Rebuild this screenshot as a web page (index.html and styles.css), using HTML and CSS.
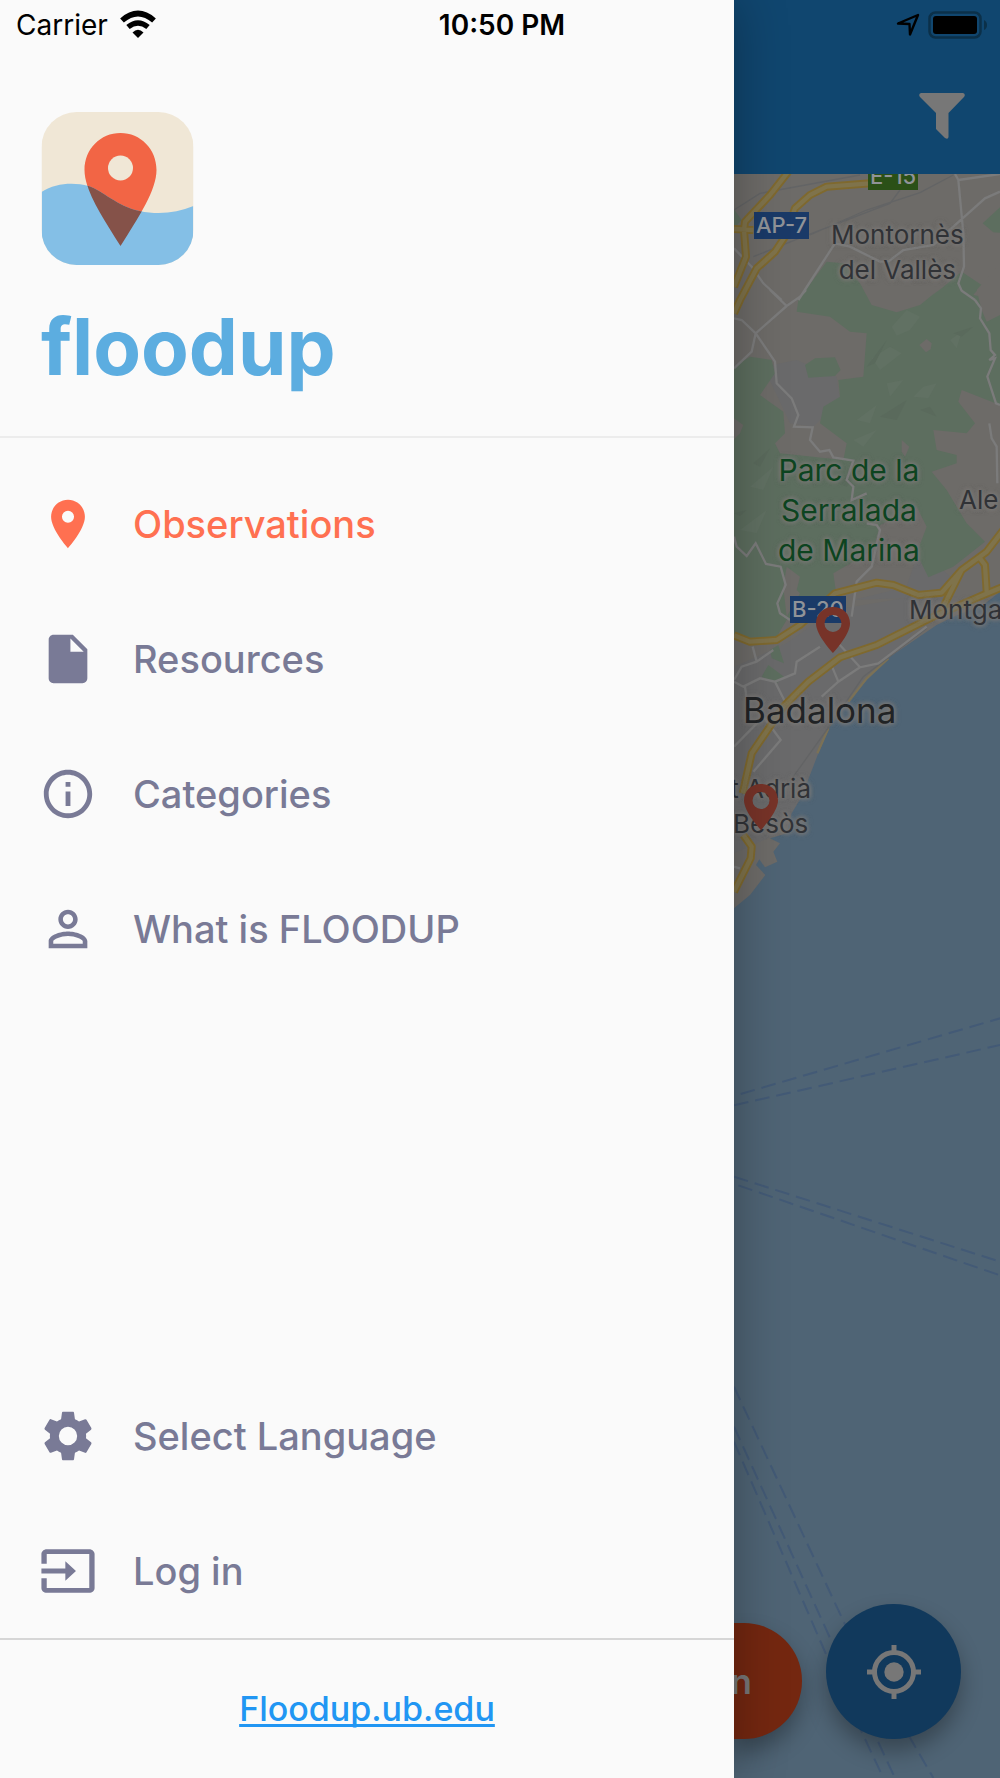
FILE: index.html
```html
<!DOCTYPE html>
<html lang="en">

<head>
    <meta charset="UTF-8">
    <meta name="viewport" content="width=device-width, initial-scale=1.0">
    <title>floodup</title>
    <link rel="stylesheet" href="styles.css">
</head>

<body>
    <div class="status-bar">
        <div class="carrier">
            <span>Carrier</span>
            <svg class="wifi" viewBox="0 0 36 30" aria-hidden="true">
                <path d="M2 10.500Q18 -3.500 34 10.500" fill="none" stroke="#000" stroke-width="5.600"/>
                <path d="M8 17Q18 9 28 17" fill="none" stroke="#000" stroke-width="5.400"/>
                <path d="M12.500 22.500Q18 17 23.500 22.500L18 28z"/>
            </svg>
        </div>
        <span class="time">10:50 PM</span>
        <div class="indicators">
            <svg class="gps" viewBox="0 0 24 24" aria-hidden="true">
                <path d="M22 2 14 21.500 13.500 11 2 10.500z" fill="none" stroke="#000" stroke-width="2.400" stroke-linejoin="round"/>
            </svg>
            <svg class="battery" viewBox="0 0 60 28" aria-hidden="true">
                <rect x="1.500" y="1.500" width="51" height="25" rx="6" fill="none" stroke="#0b3049" stroke-width="2.500"/>
                <rect x="5" y="5" width="44" height="18" rx="3"/>
                <path d="M56 9q3 1.500 3 5t-3 5z" fill="#0b3049"/>
            </svg>
        </div>
    </div>

    <div class="app">
        <aside class="drawer">
            <header class="brand">
                <svg class="logo" viewBox="0 0 152 153" aria-hidden="true">
                    <defs>
                        <clipPath id="tile"><rect width="152" height="153" rx="35"/></clipPath>
                        <clipPath id="water"><path d="M0 80C14 71 32 70 47 74C62 79 75 94 98 99C117 103 135 101 152 94V153H0z"/></clipPath>
                    </defs>
                    <g clip-path="url(#tile)">
                        <rect width="152" height="153" fill="#f0e7d6"/>
                        <path id="marker" fill="#f26545" d="M79 21C59 21 43 37 43 58C43 78 60 104 79 134C98 104 115 78 115 58C115 37 99 21 79 21z"/>
                        <g clip-path="url(#water)">
                            <rect width="152" height="153" fill="#84bfe6"/>
                            <path fill="#855249" d="M79 21C59 21 43 37 43 58C43 78 60 104 79 134C98 104 115 78 115 58C115 37 99 21 79 21z"/>
                        </g>
                        <circle cx="79" cy="56" r="12.500" fill="#f0e7d6"/>
                    </g>
                </svg>
                <h1>floodup</h1>
            </header>

            <nav class="menu">
                <a class="item active" href="#observations">
                    <svg viewBox="0 0 24 24" aria-hidden="true"><path d="M12 2C8.130 2 5 5.130 5 9c0 5.250 7 13 7 13s7-7.750 7-13c0-3.870-3.130-7-7-7zm0 9.500a2.500 2.500 0 0 1 0-5 2.500 2.500 0 0 1 0 5z"/></svg>
                    <span>Observations</span>
                </a>
                <a class="item" href="#resources">
                    <svg viewBox="0 0 24 24" aria-hidden="true"><path d="M6 2c-1.100 0-1.990.9-1.990 2L4 20c0 1.100.89 2 1.990 2H18c1.100 0 2-.9 2-2V8l-6-6H6zm7 7V3.500L18.500 9H13z"/></svg>
                    <span>Resources</span>
                </a>
                <a class="item" href="#categories">
                    <svg viewBox="0 0 24 24" aria-hidden="true"><path d="M11 17h2v-6h-2v6zm1-15C6.480 2 2 6.480 2 12s4.480 10 10 10 10-4.480 10-10S17.520 2 12 2zm0 18c-4.410 0-8-3.590-8-8s3.590-8 8-8 8 3.590 8 8-3.590 8-8 8zM11 9h2V7h-2v2z"/></svg>
                    <span>Categories</span>
                </a>
                <a class="item" href="#about">
                    <svg viewBox="0 0 24 24" aria-hidden="true"><path d="M12 5.900c1.160 0 2.100.94 2.100 2.100s-.94 2.100-2.100 2.100S9.900 9.160 9.900 8s.94-2.100 2.100-2.100m0 9c2.970 0 6.100 1.460 6.100 2.100v1.100H5.900V17c0-.64 3.130-2.100 6.100-2.100M12 4C9.790 4 8 5.790 8 8s1.790 4 4 4 4-1.790 4-4-1.790-4-4-4zm0 9c-2.670 0-8 1.340-8 4v3h16v-3c0-2.660-5.330-4-8-4z"/></svg>
                    <span>What is FLOODUP</span>
                </a>
            </nav>

            <nav class="menu menu-bottom">
                <a class="item" href="#language">
                    <svg viewBox="0 0 24 24" aria-hidden="true"><path d="M19.430 12.980c.04-.32.07-.64.07-.98s-.03-.66-.07-.98l2.110-1.650c.19-.15.24-.42.12-.64l-2-3.460c-.12-.22-.39-.3-.61-.22l-2.490 1c-.52-.4-1.080-.73-1.690-.98l-.38-2.650C14.460 2.180 14.250 2 14 2h-4c-.25 0-.46.18-.49.42l-.38 2.650c-.61.25-1.170.59-1.690.98l-2.490-1c-.23-.09-.49 0-.61.22l-2 3.460c-.13.22-.07.49.12.64l2.110 1.650c-.04.32-.07.65-.07.98s.03.66.07.98l-2.110 1.650c-.19.15-.24.42-.12.64l2 3.460c.12.22.39.3.61.22l2.490-1c.52.4 1.080.73 1.690.98l.38 2.650c.03.24.24.42.49.42h4c.25 0 .46-.18.49-.42l.38-2.650c.61-.25 1.170-.59 1.690-.98l2.490 1c.23.09.49 0 .61-.22l2-3.460c.12-.22.07-.49-.12-.64l-2.110-1.650zM12 15.800a3.800 3.800 0 1 1 0-7.600 3.800 3.800 0 0 1 0 7.600z"/></svg>
                    <span>Select Language</span>
                </a>
                <a class="item" href="#login">
                    <svg viewBox="0 0 24 24" aria-hidden="true"><path d="M20 3H4c-1.100 0-2 .9-2 2v4h2V5h16v14H4v-4H2v4c0 1.100.9 2 2 2h16c1.100 0 2-.9 2-2V5c0-1.100-.9-2-2-2zM2 11v2h9v3l4-4-4-4v3z" transform="matrix(1.1 0 0 1 -1.200 0)"/></svg>
                    <span>Log in</span>
                </a>
            </nav>

            <footer class="site-link">
                <a href="#site">Floodup.ub.edu</a>
            </footer>
        </aside>

        <main class="screen">
            <header class="toolbar">
                <button class="filter" type="button" aria-label="Filter">
                    <svg viewBox="0 0 46 46" aria-hidden="true"><path d="M2 0H44Q47 1 45 4L29.500 20V44Q29 47 26 45L17 36V20L1 4Q-1 1 2 0z"/></svg>
                </button>
            </header>

            <div class="map">
                <!-- map units are a third of a css pixel -->
                <svg class="map-canvas" viewBox="42 522 798 4812" preserveAspectRatio="xMinYMin slice" aria-hidden="true">
                    <rect class="land" x="42" y="522" width="798" height="4812"/>
                    <path class="urban" d="M130 1100L230 1080 350 1130 360 1200 280 1280 210 1270zM400 1800L560 1760 600 1640 700 1740 650 1790zM42 2000L200 1930 340 1830 700 1770 390 2100 290 2280 200 2490 42 2560z"/>

                    <!-- parks -->
                    <g class="park">
                        <path d="M320 785L370 790 420 850 455 915 530 937 600 915 655 870 630 890 665 865 725 815 785 855 760 885 840 900V1215L725 1170 715 1205 765 1270 740 1300 640 1290 650 1350 710 1365 710 1390 635 1415 680 1470 740 1570 795 1625 700 1700 625 1732 590 1660 620 1580 590 1520 480 1575 460 1650 340 1720 350 1790 300 1840 200 1860 170 1910 42 1915V1100L90 1070 155 1080 165 1120 120 1185 190 1235 195 1300 165 1330 180 1360 370 1380 380 1330 300 1270 310 1220 360 1190 355 1140 430 1130 440 1000 390 995 330 950 230 935 235 900z"/>
                        <path d="M255 1095L285 1075 345 1072 362 1110 345 1128 265 1133z"/>
                        <path d="M788 670L840 622V698L820 697z"/>
                        <path d="M42 628L65 660 42 685z"/>
                        <path d="M150 1950L175 1935 192 1990 155 1975zM125 2030L145 1995 192 2030 170 2050z"/>
                    </g>
                    <g class="land">
                        <path d="M770 870L785 930 800 965 840 945V790z"/>
                        <path d="M598 1035L620 1017 635 1030 632 1048 618 1057z"/>
                        <path d="M42 1255L70 1275 60 1300 42 1318z"/>
                        <path d="M545 1320L568 1340 555 1370 545 1355z"/>
                        <path d="M200 1700L240 1730 230 1770 240 1780 200 1850 190 1760z"/>
                    </g>
                    <g class="relief">
                        <path d="M515 980L560 930 600 950 570 990 530 1007zM455 1075L510 1040 545 1060 480 1110zM580 1190L610 1160 650 1150 625 1195zM410 1260L470 1215 450 1270zM500 1150L550 1140 510 1190zM690 1020L725 995 710 1045zM400 1320L470 1290 430 1340zM90 1460L160 1400 130 1470zM60 1590L140 1530 110 1600z"/>
                        <path class="dark" d="M600 1230L630 1220 650 1250zM700 1000L760 980 725 1010zM440 1100L500 1020 465 1090zM42 1540L80 1530 60 1548zM100 1390L150 1345 120 1400zM480 1250L560 1200 530 1260zM350 1450L430 1400 380 1460z"/>
                    </g>

                    <!-- sea -->
                    <path class="sea" d="M840 1775L790 1815 700 1850 650 1875 510 1970 440 2040 385 2105 330 2180 295 2260 268 2330 245 2390 215 2440 200 2500 150 2515 180 2530 160 2555 172 2585 135 2602 118 2578 108 2595 136 2625 90 2685 42 2725V5334H840z"/>
                    <path class="beach" d="M505 1975L440 2035 385 2105M325 2185L292 2260"/>

                    <!-- rail -->
                    <path class="rail" d="M42 630L120 580 420 525M270 705L440 630 600 578 700 525M100 770L250 710 510 610 540 570M620 1885L430 2030 320 2190 220 2330"/>
                    <!-- small roads -->
                    <path class="street" d="M705 522L715 540 730 700 732 800 715 850 725 872 765 900M715 540L840 522M840 575L795 595 700 680 640 735 550 750 505 785M235 900L345 730 390 740 480 785 505 785M42 745L95 800 130 850 185 900M150 870L200 918 240 890 258 870M200 918L107 1000 95 1055 42 1105M42 955L65 960 107 1000 165 1085 170 1150 215 1195 235 1245 222 1280 278 1282 270 1320 300 1355 328 1350 340 1372 400 1382 380 1440 400 1460 395 1500 440 1480M765 900L783 925 780 955 808 1000 812 1050 825 1065 808 1080 825 1075 802 1130 828 1210 840 1215M808 1270L815 1315 830 1340 832 1450M440 1570L470 1575 480 1590 455 1700 410 1745 395 1850M42 1610L50 1640 80 1668 107 1630 138 1692 182 1700 197 1755 172 1810 180 1840 210 1860M620 1880L475 1990 420 2002 355 1930M475 1990M420 2002L355 2045 305 2090M355 2045L332 1990M300 1940L230 1985 225 2020 165 2045 120 2035 70 2060 42 2045M42 2040L65 2000 110 1985 160 1950M110 1985L98 1940M165 2045L205 2125M75 2060L85 2140M42 2240L130 2150 182 2220 100 2315M42 2600L60 2605"/>

                    <!-- highways: casing, then centre -->
                    <g class="highway">
                        <path id="roads" d="M205 515L150 585 75 665 72 690 78 770 42 860M42 687L100 690M450 550L320 560 270 585 225 625 195 710 165 755 110 805 60 900 42 940M42 1906L90 1925 170 1920 240 1875 345 1780 470 1748 520 1755 595 1785 665 1778 725 1710 800 1655 850 1590M780 1675L795 1695 800 1775M665 1830L725 1710M850 1760L790 1785 640 1850 470 1935 360 1972 265 2045 190 2120 95 2260 68 2380M70 2505L95 2540 92 2575 42 2675"/>
                    </g>
                    <use class="highway-core" href="#roads"/>

                    <!-- ferry lines -->
                    <path class="ferry" d="M62 3282L840 3055M42 3316L840 3135M42 3530L840 3785M55 3556L840 3826M42 4160L385 4895 640 5334M42 4280L360 4980 525 5334M42 4325L345 5025 490 5334"/>
                </svg>

                <span class="badge green e15">E-15</span>
                <span class="badge ap7">AP-7</span>
                <span class="badge b20">B-20</span>
                <span class="label montornes">Montornès<br>del Vallès</span>
                <span class="label parc">Parc de la<br>Serralada<br>de Marina</span>
                <span class="label alella">Ale</span>
                <span class="label montgat">Montga</span>
                <span class="label badalona">Badalona</span>
                <span class="label adria">t Adrià<br>Besòs</span>

                <svg class="pin pin-badalona" viewBox="0 0 34 46" aria-hidden="true"><path fill-rule="evenodd" d="M17 0C7 0 0 7 0 16.500C0 28 17 46 17 46S34 28 34 16.500C34 7 27 0 17 0zM17 8a8.500 8.500 0 1 1 0 17a8.500 8.500 0 0 1 0-17z"/></svg>
                <svg class="pin pin-besos" viewBox="0 0 34 46" aria-hidden="true"><path fill-rule="evenodd" d="M17 0C7 0 0 7 0 16.500C0 28 17 46 17 46S34 28 34 16.500C34 7 27 0 17 0zM17 8a8.500 8.500 0 1 1 0 17a8.500 8.500 0 0 1 0-17z"/></svg>

                <div class="actions">
                    <button class="add" type="button">n</button>
                    <button class="locate" type="button" aria-label="My location">
                        <svg viewBox="0 0 54 54" aria-hidden="true">
                            <circle cx="27" cy="27" r="19.500" fill="none" stroke="#777" stroke-width="5"/>
                            <circle cx="27" cy="27" r="9.700" fill="#777"/>
                            <path d="M27 0V7M27 47V54M0 27H7M47 27H54" stroke="#777" stroke-width="5"/>
                        </svg>
                    </button>
                </div>
            </div>
        </main>
    </div>
</body>

</html>
```
FILE: styles.css
```css
* {
    box-sizing: border-box;
}

body {
    margin: 0;
    font-family: Inter, "Liberation Sans", sans-serif;
    background-color: #fafafa;
}

a {
    color: inherit;
    text-decoration: none;
}

button {
    border: 0;
    padding: 0;
    font-family: inherit;
    cursor: pointer;
}

svg {
    display: block;
}

/* status bar lies over the drawer and the screen */
.status-bar {
    position: absolute;
    top: 0;
    left: 0;
    right: 0;
    z-index: 3;
    display: grid;
    grid-template-columns: 1fr auto 1fr;
    align-items: center;
    height: 50px;
    padding: 0 12px 0 16px;
    font-size: 28px;
    color: #000;
}

.carrier,
.indicators {
    display: flex;
    align-items: center;
    gap: 12px;
}

.indicators {
    justify-content: flex-end;
    gap: 8px;
}

.time {
    font-weight: 600;
}

.wifi {
    width: 36px;
    height: 30px;
}

.gps {
    width: 24px;
    height: 24px;
}

.battery {
    width: 60px;
    height: 28px;
}

.app {
    display: grid;
    grid-template-columns: 734fr 266fr;
    min-height: 100vh;
}

/* drawer */
.drawer {
    position: relative;
    z-index: 2;
    display: flex;
    flex-direction: column;
    background-color: #fafafa;
    box-shadow: 0 0 50px rgba(0, 0, 0, 0.3);
}

.brand {
    padding: 112px 41px 39px;
    border-bottom: 2px solid #ececec;
}

.logo {
    width: 153px;
    height: 153px;
}

h1 {
    margin: 32px 0 0;
    font-size: 78px;
    line-height: 100px;
    font-weight: 700;
    color: #5cade0;
    font-variant-ligatures: none;
}

.menu {
    padding-top: 18px;
}

.menu-bottom {
    margin-top: auto;
    padding-top: 0;
}

.item {
    display: flex;
    align-items: center;
    gap: 36px;
    height: 135px;
    padding: 0 39px;
    font-size: 38px;
    font-weight: 500;
    color: #797a96;
}

.item svg {
    width: 58px;
    height: 58px;
    fill: currentColor;
}

.active {
    color: #ff7051;
}

.site-link {
    display: flex;
    justify-content: center;
    align-items: center;
    height: 140px;
    padding-bottom: 2px;
    border-top: 2px solid #d6d6d6;
}

.site-link a {
    font-size: 34px;
    font-weight: 500;
    color: #2196f3;
    text-decoration: underline;
    text-decoration-thickness: 3px;
    text-decoration-skip-ink: none;
    text-underline-offset: 3px;
}

/* screen behind the drawer */
.screen {
    display: flex;
    flex-direction: column;
    overflow: hidden;
}

.toolbar {
    display: flex;
    justify-content: flex-end;
    align-items: flex-end;
    height: 174px;
    padding: 35px;
    background-color: #10466f;
}

.filter {
    background: none;
}

.filter svg {
    width: 46px;
    height: 46px;
    fill: #777;
}

.map {
    position: relative;
    flex: 1;
    overflow: hidden;
    background-color: #4f6475;
}

.map-canvas {
    width: 100%;
    height: 100%;
}

.land {
    fill: #6d6b68;
}

.urban {
    fill: #6a6a6b;
}

.park {
    fill: #5d6e5f;
}

.relief {
    fill: #617163;
}

.relief .dark {
    fill: #5a6a5c;
}

.sea {
    fill: #4f6475;
}

.beach {
    fill: none;
    stroke: #7b7156;
    stroke-width: 7;
}

.rail {
    fill: none;
    stroke: #636465;
    stroke-width: 4;
}

.street {
    fill: none;
    stroke: #7b7b7b;
    stroke-width: 7;
}

.highway {
    fill: none;
    stroke: #7f692e;
    stroke-width: 24;
    stroke-linejoin: round;
}

.highway-core {
    fill: none;
    stroke: #7f734b;
    stroke-width: 13;
    stroke-linejoin: round;
}

.ferry {
    fill: none;
    stroke: #435a76;
    stroke-width: 6;
    stroke-dasharray: 44 21;
}

/* places on the map */
.label {
    position: absolute;
    font-size: 26px;
    line-height: 35px;
    text-align: center;
    white-space: nowrap;
    color: #303236;
    text-shadow: 0 0 4px #7b7977, 0 0 4px #7b7977, 0 0 6px #7b7977;
}

.montornes {
    left: 97px;
    top: 43px;
}

.parc {
    left: 44px;
    top: 276px;
    font-size: 30px;
    line-height: 40px;
    color: #0d4420;
}

.alella {
    left: 225px;
    top: 308px;
}

.montgat {
    left: 175px;
    top: 418px;
}

.badalona {
    left: 9px;
    top: 519px;
    font-size: 35px;
    color: #212325;
}

.adria {
    right: 189px;
    top: 597px;
}

.badge {
    position: absolute;
    padding: 0 2px;
    font-size: 22px;
    line-height: 27px;
    font-weight: 500;
    color: #909398;
    background-color: #1a3a68;
}

.green {
    background-color: #2b5017;
}

.e15 {
    left: 134px;
    top: -11px;
}

.ap7 {
    left: 20px;
    top: 38px;
}

.b20 {
    left: 56px;
    top: 422px;
}

.pin {
    position: absolute;
    width: 34px;
    height: 46px;
    fill: #773328;
}

.pin-badalona {
    left: 82px;
    top: 433px;
}

.pin-besos {
    left: 10px;
    top: 610px;
}

.actions {
    position: absolute;
    left: 0;
    right: 39px;
    bottom: 39px;
    display: flex;
    align-items: flex-end;
    gap: 24px;
}

.add {
    display: flex;
    flex: 1;
    justify-content: flex-end;
    align-items: center;
    min-width: 0;
    height: 116px;
    padding-right: 50px;
    font-size: 35px;
    font-weight: 600;
    color: #777;
    background-color: #742710;
    border-radius: 0 58px 58px 0;
    box-shadow: 0 12px 22px rgba(0, 0, 0, 0.3);
}

.locate {
    display: flex;
    justify-content: center;
    align-items: center;
    width: 135px;
    height: 135px;
    background-color: #11395c;
    border-radius: 50%;
    box-shadow: 0 12px 22px rgba(0, 0, 0, 0.3);
}

.locate svg {
    width: 54px;
    height: 54px;
}
```
